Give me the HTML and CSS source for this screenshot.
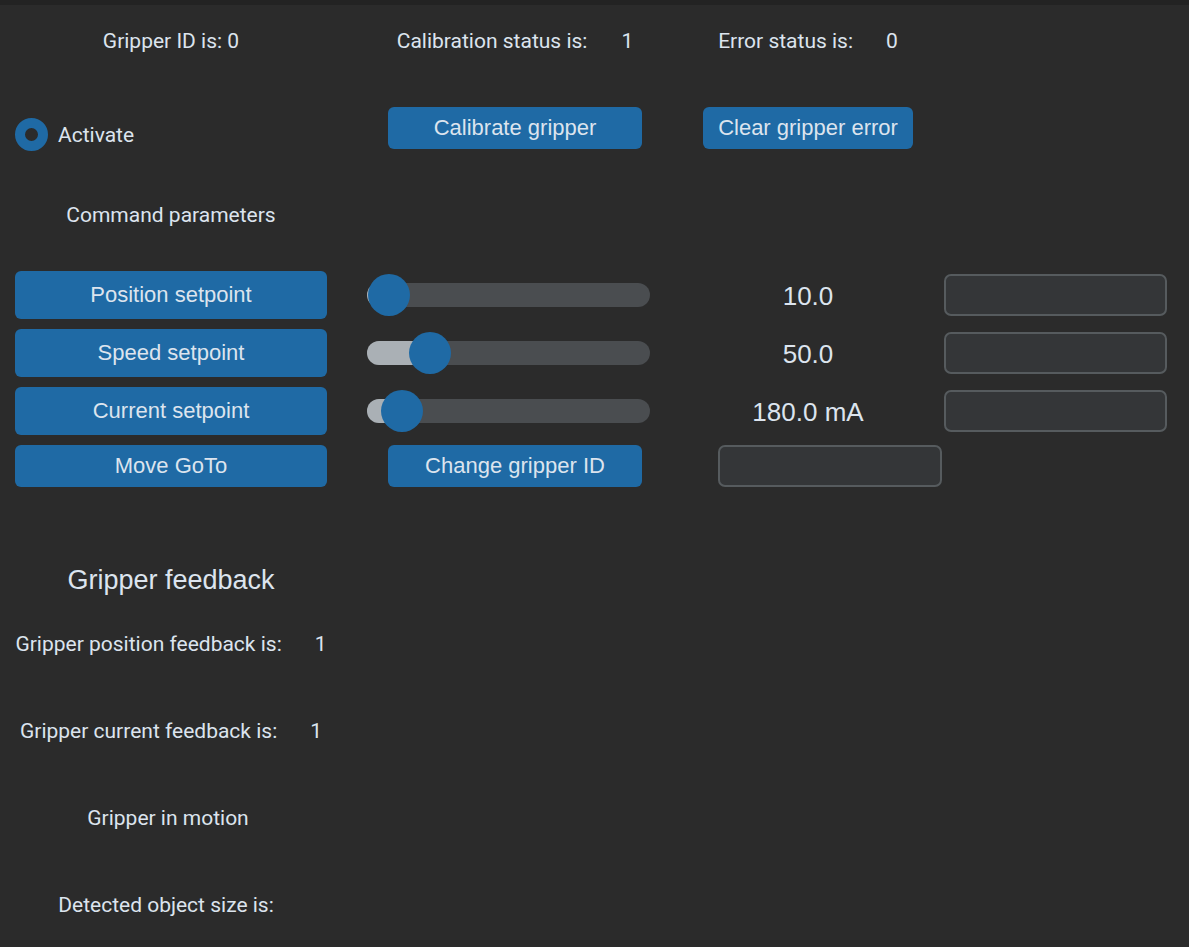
FILE: index.html
```html
<!DOCTYPE html>
<html>
<head>
<meta charset="utf-8">
<link rel="stylesheet" href="styles.css">
</head>
<body>
<div class="topbar"></div>
<main class="app">
  <section class="grid status-row">
    <div class="cell c0 center"><span class="label">Gripper ID is: 0</span></div>
    <div class="cell c1 center pair-cal"><span class="label">Calibration status is:</span><span class="label">1</span></div>
    <div class="cell c2 center pair-err"><span class="label">Error status is:</span><span class="label">0</span></div>
  </section>

  <section class="grid action-row">
    <label class="cell c0 radio-wrap"><span class="radio"></span><span class="label">Activate</span></label>
    <div class="cell c1 center top"><button class="btn btn-cal">Calibrate gripper</button></div>
    <div class="cell c2 top"><button class="btn btn-clear">Clear gripper error</button></div>
  </section>

  <section class="grid title-row">
    <div class="cell c0 center"><span class="label">Command parameters</span></div>
  </section>

  <section class="grid controls">
    <button class="btn btn-wide c0 r1">Position setpoint</button>
    <div class="slider c1 r1"><div class="fill" style="width:22px"></div><div class="knob" style="left:1px"></div></div>
    <div class="value c2 r1">10.0</div>
    <div class="entry c3 r1"></div>

    <button class="btn btn-wide c0 r2">Speed setpoint</button>
    <div class="slider c1 r2"><div class="fill" style="width:63px"></div><div class="knob" style="left:42px"></div></div>
    <div class="value c2 r2">50.0</div>
    <div class="entry c3 r2"></div>

    <button class="btn btn-wide c0 r3">Current setpoint</button>
    <div class="slider c1 r3"><div class="fill" style="width:35px"></div><div class="knob" style="left:14px"></div></div>
    <div class="value c2 r3">180.0 mA</div>
    <div class="entry c3 r3"></div>

    <button class="btn btn-wide btn-short c0 r4">Move GoTo</button>
    <div class="cell c1 r4 center"><button class="btn btn-cal">Change gripper ID</button></div>
    <div class="entry entry-id r4"></div>
  </section>

  <section class="feedback">
    <h2 class="fb-title">Gripper feedback</h2>
    <div class="fb-row"><span class="label">Gripper position feedback is:</span><span class="label">1</span></div>
    <div class="fb-row"><span class="label">Gripper current feedback is:</span><span class="label">1</span></div>
    <div class="fb-row fb-motion"><span class="label">Gripper in motion</span></div>
    <div class="fb-row fb-last"><span class="label">Detected object size is:</span><span class="label"></span></div>
  </section>
</main>
</body>
</html>
```
FILE: styles.css
```css
html, body {
  margin: 0;
  padding: 0;
  background: #2b2b2b;
  height: 100%;
  overflow: hidden;
}
body {
  font-family: Roboto, "Liberation Sans", sans-serif;
  color: #dce4ee;
}
.topbar {
  height: 5px;
  background: #232323;
}
.app {
  padding-left: 15px;
}
.grid {
  display: grid;
  grid-template-columns: 312px 376px 210px 276px;
}
.c0 { grid-column: 1; }
.c1 { grid-column: 2; }
.c2 { grid-column: 3; }
.c3 { grid-column: 4; }
.r1 { grid-row: 1; }
.r2 { grid-row: 2; }
.r3 { grid-row: 3; }
.r4 { grid-row: 4; }

.cell {
  display: flex;
  align-items: center;
}
.center { justify-content: center; }
.top { align-self: start; }

.label {
  font-size: 21px;
  line-height: 30px;
  white-space: nowrap;
}
.pair-cal { gap: 34px; }
.pair-err { gap: 33px; }

.status-row {
  margin-top: 21px;
  height: 30px;
}
.action-row {
  margin-top: 51px;
  height: 44px;
}
.radio-wrap {
  align-self: end;
  gap: 10px;
}
.radio {
  width: 13px;
  height: 13px;
  border: 10px solid #1f6aa5;
  border-radius: 50%;
  background: #2b2b2b;
}

.btn {
  font-family: "Liberation Sans", Arial, sans-serif;
  font-size: 22px;
  color: #dce4ee;
  background: #1f6aa5;
  border: none;
  border-radius: 6px;
  height: 42px;
  padding: 0;
  margin: 0;
}
.btn-cal { width: 254px; }
.btn-clear { width: 210px; }
.btn-wide { width: 312px; height: 48px; }
.btn-short { height: 42px; }

.title-row {
  margin-top: 49px;
  height: 30px;
}

.controls {
  margin-top: 41px;
  grid-template-rows: 48px 48px 48px 42px;
  row-gap: 10px;
}
.slider {
  position: relative;
  align-self: center;
  margin-left: 40px;
  width: 283px;
  height: 24px;
  border-radius: 12px;
  background: #4a4d50;
}
.fill {
  height: 24px;
  border-radius: 12px 0 0 12px;
  background: #aab0b5;
}
.knob {
  position: absolute;
  top: -9px;
  width: 42px;
  height: 42px;
  border-radius: 50%;
  background: #1f6aa5;
}
.value {
  font-family: "Liberation Sans", Arial, sans-serif;
  font-size: 26px;
  line-height: 48px;
  text-align: center;
  margin-top: 1px;
}
.entry {
  align-self: center;
  box-sizing: border-box;
  margin-left: 31px;
  width: 223px;
  height: 42px;
  border: 2px solid #565b5e;
  border-radius: 7px;
  background: #343638;
}
.entry-id {
  grid-column: 3 / 5;
  margin-left: 15px;
  width: 224px;
}

.feedback {
  width: 312px;
  display: flex;
  flex-direction: column;
  align-items: center;
}
.fb-title {
  margin: 77px 0 0;
  font-family: "Liberation Sans", Arial, sans-serif;
  font-weight: normal;
  font-size: 27px;
  line-height: 32px;
}
.fb-row {
  display: flex;
  gap: 33px;
  height: 30px;
  align-items: center;
  margin-top: 57px;
}
.fb-title + .fb-row { margin-top: 33px; }
.fb-motion { padding-right: 6px; }
.fb-last { gap: 0; padding-right: 10px; }
```
